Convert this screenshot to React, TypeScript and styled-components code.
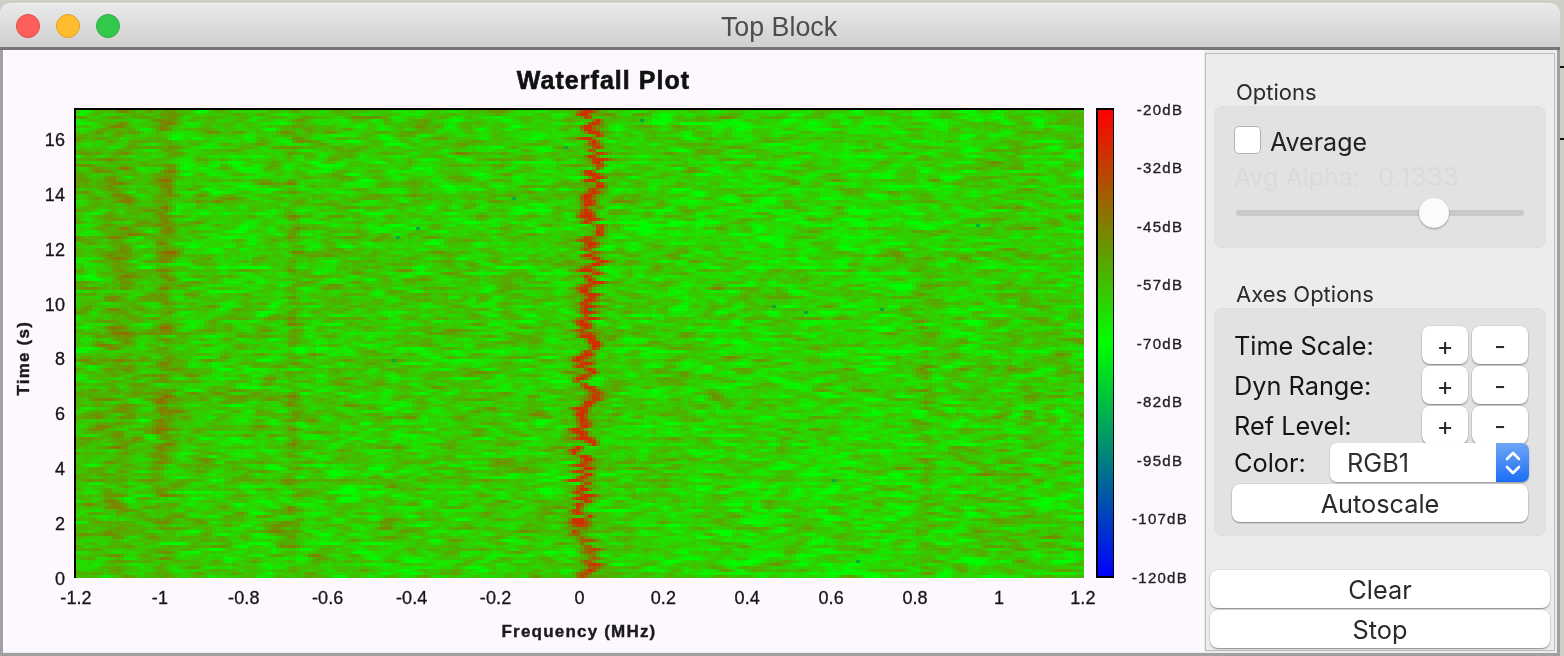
import React, { useEffect, useRef } from "react";
import styled, { createGlobalStyle } from "styled-components";

const Global = createGlobalStyle`
  html, body { margin: 0; padding: 0; background: #d2d1c9; }
  * { box-sizing: border-box; }
`;

const Desktop = styled.div`
  width: 1564px;
  height: 656px;
  overflow: hidden;
  display: flex;
  background: #cfcec6;
`;

const Window = styled.div`
  width: 1560px;
  height: 656px;
  margin-top: 3px;
  display: flex;
  flex-direction: column;
`;

const TitleBar = styled.div`
  height: 47px;
  flex: none;
  position: relative;
  display: flex;
  align-items: center;
  justify-content: center;
  padding-top: 3px;
  border-radius: 11px 11px 0 0;
  background: linear-gradient(#e9e9e9, #cfcfcf);
  border-top: 1px solid #f2f2f2;
  border-bottom: 3px solid #757575;
`;

const Lights = styled.div`
  position: absolute;
  left: 16px;
  top: 10px;
  display: flex;
  gap: 16px;
`;

const Light = styled.span<{ $fill: string; $edge: string }>`
  width: 24px;
  height: 24px;
  border-radius: 50%;
  background: ${(p) => p.$fill};
  border: 1px solid ${(p) => p.$edge};
`;

const WindowTitle = styled.div`
  font: 26.8px "Liberation Sans", sans-serif;
  color: #4d4d4d;
  transform: translateX(-1px);
`;

const Body = styled.div`
  flex: none;
  height: 606px;
  display: flex;
  background: #ececec;
  border-left: 3px solid #a2a2a2;
  border-right: 3px solid #a0a0a0;
  border-bottom: 3px solid #a0a0a0;
`;

const PlotPanel = styled.div`
  width: 1201px;
  height: 602px;
  flex: none;
  display: flex;
  flex-direction: column;
  background: #fdf8ff;
  color: #111;
  font-family: "Liberation Sans", Arial, sans-serif;
`;

const PlotTitle = styled.div`
  height: 58px;
  flex: none;
  display: flex;
  align-items: center;
  justify-content: center;
  padding-top: 3px;
  font-size: 25px;
  font-weight: 700;
  letter-spacing: 1.05px;
  -webkit-text-stroke: 0.6px #111;
  filter: blur(0.35px);
`;

const PlotRow = styled.div`
  height: 470px;
  flex: none;
  display: flex;
`;

const AxisName = styled.div`
  font-size: 17px;
  font-weight: 700;
  letter-spacing: 1.2px;
  color: #1a1a1a;
  white-space: nowrap;
  -webkit-text-stroke: 0.4px #1a1a1a;
  filter: blur(0.35px);
`;

const YName = styled(AxisName)`
  width: 42px;
  flex: none;
  padding-top: 30px;
  display: flex;
  align-items: center;
  justify-content: center;
  span {
    writing-mode: vertical-rl;
    transform: rotate(180deg);
  }
`;

const YTicks = styled.div`
  width: 20px;
  margin-right: 9px;
  flex: none;
  display: flex;
  flex-direction: column-reverse;
  align-items: flex-end;
  gap: 54.8px;
`;

const Tick = styled.div`
  height: 0;
  width: 0;
  display: flex;
  align-items: center;
  white-space: nowrap;
  font-size: 18px;
  letter-spacing: 0.1px;
  color: #141414;
  -webkit-text-stroke: 0.3px #141414;
  filter: blur(0.35px);
`;

const YTick = styled(Tick)`
  justify-content: flex-end;
  transform: translateY(1px);
`;

const Frame = styled.div`
  width: 1010px;
  height: 470px;
  flex: none;
  border-left: 2px solid #000;
  border-top: 2px solid #000;
`;

const Heat = styled.canvas`
  display: block;
  width: 1008px;
  height: 468px;
`;

const ColorBar = styled.div`
  width: 18px;
  height: 470px;
  margin-left: 12px;
  flex: none;
  border: solid #000;
  border-width: 2px 1px 2px 2px;
  background: linear-gradient(#ff0000, #00ff00 50%, #0000ff);
`;

const DbScale = styled.div`
  width: 0;
  height: 470px;
  margin-left: 46px;
  padding-top: 1px;
  padding-bottom: 1px;
  flex: none;
  display: flex;
  flex-direction: column;
  justify-content: space-between;
`;

const DbTick = styled(Tick)`
  justify-content: center;
  font-size: 15px;
  letter-spacing: 1.25px;
  color: #222;
  -webkit-text-stroke: 0.35px #222;
`;

const XTicks = styled.div`
  height: 40px;
  width: 1007px;
  margin-left: 73px;
  flex: none;
  display: flex;
  align-items: center;
  justify-content: space-between;
`;

const XTick = styled(Tick)`
  justify-content: center;
`;

const XName = styled(AxisName)`
  width: 1008px;
  margin-left: 72px;
  margin-top: 5px;
  text-align: center;
  line-height: 18px;
`;

const Side = styled.div`
  width: 353px;
  height: 603px;
  flex: none;
  padding: 3px 2px 2px 1px;
`;

const SideFrame = styled.div`
  height: 598px;
  border: 1px solid #bcbcbc;
  font-family: Inter, "Liberation Sans", sans-serif;
  display: flex;
  flex-direction: column;
  align-items: flex-start;
  padding-top: 24px;
`;

const GroupName = styled.div<{ $gap?: number }>`
  height: 28px;
  margin-left: 30px;
  margin-top: ${(p) => p.$gap ?? 0}px;
  font-size: 22px;
  line-height: 28px;
  color: #2b2b2b;
`;

const Group = styled.div<{ $height: number; $top: number }>`
  width: 332px;
  height: ${(p) => p.$height}px;
  margin-left: 8px;
  padding: ${(p) => p.$top}px 17px 0 19px;
  background: #e2e2e2;
  border: 1px solid #dedede;
  border-radius: 8px;
`;

const CheckRow = styled.div`
  height: 28px;
  display: flex;
  align-items: center;
  gap: 9px;
  font-size: 25px;
  color: #222;
`;

const CheckLabel = styled.span`
  padding-top: 3px;
`;

const CheckBox = styled.span`
  width: 27px;
  height: 28px;
  background: #fff;
  border: 1px solid #b2b2b2;
  border-radius: 5px;
`;

const Disabled = styled.div`
  height: 30px;
  margin-top: 8px;
  display: flex;
  gap: 18px;
  font-size: 25px;
  line-height: 30px;
  color: #dadada;
  white-space: nowrap;
`;

const DisabledValue = styled.span`
  letter-spacing: 0.8px;
`;

const Slider = styled.div`
  width: 288px;
  height: 30px;
  margin-top: 6px;
  margin-left: 2px;
  position: relative;
  display: flex;
  align-items: center;
`;

const Track = styled.div`
  width: 100%;
  height: 6px;
  border-radius: 3px;
  background: #c9c9c9;
`;

const Thumb = styled.div`
  position: absolute;
  left: 183px;
  top: 0;
  width: 30px;
  height: 30px;
  border-radius: 50%;
  background: #fbfbfb;
  box-shadow: 0 1px 2px rgba(0, 0, 0, 0.35);
`;

const Row = styled.div`
  height: 38px;
  margin-bottom: 2px;
  display: flex;
  align-items: center;
`;

const RowLabel = styled.div<{ $width: number }>`
  width: ${(p) => p.$width}px;
  flex: none;
  font-size: 25.3px;
  color: #151515;
  white-space: nowrap;
`;

const Button = styled.div<{ $width: number }>`
  width: ${(p) => p.$width}px;
  height: 38px;
  flex: none;
  display: flex;
  align-items: center;
  justify-content: center;
  padding-top: 1px;
  background: #fff;
  border-radius: 8px;
  box-shadow: 0 1px 1.5px rgba(0, 0, 0, 0.4), 0 0 0 0.5px rgba(0, 0, 0, 0.08);
  font-size: 25.3px;
  color: #2a2a2a;
`;

const StepButtons = styled.div`
  display: flex;
  gap: 4px;
`;

const ColorRow = styled(Row)`
  height: 39px;
  margin-top: -3px;
  position: relative;
`;

const Combo = styled.div`
  width: 199px;
  height: 39px;
  flex: none;
  display: flex;
  background: #fff;
  border-radius: 7px;
  box-shadow: 0 1px 1.5px rgba(0, 0, 0, 0.35);
  font-size: 25.3px;
  color: #2f2f2f;
`;

const ComboText = styled.div`
  flex: 1;
  padding-left: 17px;
  line-height: 40px;
`;

const ComboArrow = styled.div`
  width: 33px;
  display: flex;
  align-items: center;
  justify-content: center;
  border-radius: 0 7px 7px 0;
  background: linear-gradient(#6fa6f4, #1a6ef6);
`;

const WideInGroup = styled(Button)`
  margin-left: -2px;
`;

const BottomStack = styled.div`
  margin-top: 34px;
  margin-left: 4px;
  display: flex;
  flex-direction: column;
  gap: 2px;
`;

const Edge = styled.div`
  width: 4px;
  flex: none;
  padding-top: 66px;
  display: flex;
  flex-direction: column;
  gap: 70px;
`;

const EdgeMark = styled.span`
  height: 2px;
  background: #111;
`;

function rng(seed: number) {
  let s = seed >>> 0;
  return () => {
    s = (s + 0x6d2b79f5) >>> 0;
    let t = s;
    t = Math.imul(t ^ (t >>> 15), t | 1);
    t ^= t + Math.imul(t ^ (t >>> 7), t | 61);
    return ((t ^ (t >>> 14)) >>> 0) / 4294967296;
  };
}

const bumps: [number, number, number, number, number][] = [
  // px centre in plot, width, amplitude, row-from, row-to (fractions)
  [45, 12, 0.1, 0, 1],
  [90, 9, 0.17, 0, 0.75],
  [84, 14, 0.08, 0.6, 1],
  [218, 6, 0.12, 0, 1],
  [850, 8, 0.12, 0.3, 1],
  [930, 25, 0.03, 0, 1],
  [30, 50, 0.05, 0, 1],
];

function paint(canvas: HTMLCanvasElement) {
  const W = 252;
  const H = 156;
  const rand = rng(4242);
  const gauss = () => (rand() + rand() + rand() + rand() - 2) * 1.7;
  const off = document.createElement("canvas");
  off.width = W;
  off.height = H;
  const octx = off.getContext("2d")!;
  const img = octx.createImageData(W, H);

  const raw: number[] = new Array((W + 8) * (H + 4));
  for (let i = 0; i < raw.length; i++) raw[i] = gauss();
  const at = (x: number, y: number) => raw[(y + 2) * (W + 8) + x + 4];

  const coarse: number[] = [];
  for (let i = 0; i < 40 * 30; i++) coarse[i] = gauss();
  const field = (x: number, y: number) => {
    const fx = (x / W) * 38;
    const fy = (y / H) * 28;
    const ix = Math.floor(fx);
    const iy = Math.floor(fy);
    const ax = fx - ix;
    const ay = fy - iy;
    const c = (a: number, b: number) => coarse[b * 40 + a];
    return (
      c(ix, iy) * (1 - ax) * (1 - ay) +
      c(ix + 1, iy) * ax * (1 - ay) +
      c(ix, iy + 1) * (1 - ax) * ay +
      c(ix + 1, iy + 1) * ax * ay
    );
  };

  let wander = 0;
  for (let y = 0; y < H; y++) {
    const t = y / H;
    wander = wander * 0.3 + (rand() - 0.5) * 3;
    const rowOff = gauss() * 0.02;
    const drift = 511 + 4 * Math.sin(t * 7) + 6 * Math.sin(t * 2.6 + 0.4) - 6 * t;
    const centre = drift + wander * 6;
    const peak = (t > 0.88 ? 0.42 : 0.62) + (rand() - 0.5) * 0.18;
    const peakWidth = 4 + rand() * 6;
    for (let x = 0; x < W; x++) {
      const px = (x + 0.5) * 4;
      const n =
        at(x, y) +
        0.7 * (at(x - 1, y) + at(x + 1, y)) +
        0.3 * (at(x - 2, y) + at(x + 2, y)) +
        0.2 * (at(x, y - 1) + at(x, y + 1));
      let v = 0.2 + n * 0.058 + rowOff + field(x, y) * 0.012;
      v -= 0.035 * Math.exp(-Math.pow((px - 760) / 160, 2));
      for (const [c, w, a, from, to] of bumps) {
        if (t < from || t > to) continue;
        const d = (px - c - Math.sin(y * 0.7) * 3) / w;
        v += a * Math.exp(-d * d) * (0.7 + rand() * 0.5);
      }
      const d = (px - centre) / peakWidth;
      v += peak * Math.exp(-d * d);
      const sd = (px - drift) / 17;
      v += 0.1 * Math.exp(-sd * sd) * rand();
      const i = (y * W + x) * 4;
      const sp = rand() < 0.0003;
      const c = Math.max(0, Math.min(0.82, v));
      img.data[i] = sp ? 0 : 255 * c;
      img.data[i + 1] = sp ? 170 : 255 * (1 - c);
      img.data[i + 2] = sp ? 60 : 0;
      img.data[i + 3] = 255;
    }
  }
  octx.putImageData(img, 0, 0);
  canvas.width = 1008;
  canvas.height = 468;
  const ctx = canvas.getContext("2d")!;
  ctx.imageSmoothingEnabled = false;
  ctx.drawImage(off, 0, 0, 1008, 468);
}

function Waterfall() {
  const ref = useRef<HTMLCanvasElement>(null);
  useEffect(() => {
    if (ref.current) paint(ref.current);
  }, []);
  return <Heat ref={ref} />;
}

const Chevrons = () => (
  <svg width="18" height="28" viewBox="0 0 18 28" fill="none" stroke="#fff" strokeWidth="2.6" strokeLinecap="round" strokeLinejoin="round">
    <path d="M3 10 L9 4 L15 10" />
    <path d="M3 18 L9 24 L15 18" />
  </svg>
);

const xLabels = ["-1.2", "-1", "-0.8", "-0.6", "-0.4", "-0.2", "0", "0.2", "0.4", "0.6", "0.8", "1", "1.2"];
const yLabels = ["0", "2", "4", "6", "8", "10", "12", "14", "16"];
const dbLabels = ["-20dB", "-32dB", "-45dB", "-57dB", "-70dB", "-82dB", "-95dB", "-107dB", "-120dB"];
const steps = ["Time Scale:", "Dyn Range:", "Ref Level:"];

export default function App() {
  return (
    <Desktop>
      <Global />
      <Window>
        <TitleBar>
          <Lights>
            <Light $fill="#ff5f5a" $edge="#e2483f" />
            <Light $fill="#ffbd2e" $edge="#e1a028" />
            <Light $fill="#34c84a" $edge="#2aad3c" />
          </Lights>
          <WindowTitle>Top Block</WindowTitle>
        </TitleBar>
        <Body>
          <PlotPanel>
            <PlotTitle>Waterfall Plot</PlotTitle>
            <PlotRow>
              <YName>
                <span>Time (s)</span>
              </YName>
              <YTicks>
                {yLabels.map((l) => (
                  <YTick key={l}>{l}</YTick>
                ))}
              </YTicks>
              <Frame>
                <Waterfall />
              </Frame>
              <ColorBar />
              <DbScale>
                {dbLabels.map((l) => (
                  <DbTick key={l}>{l}</DbTick>
                ))}
              </DbScale>
            </PlotRow>
            <XTicks>
              {xLabels.map((l) => (
                <XTick key={l}>{l}</XTick>
              ))}
            </XTicks>
            <XName>Frequency (MHz)</XName>
          </PlotPanel>
          <Side>
            <SideFrame>
              <GroupName>Options</GroupName>
              <Group $height={142} $top={19}>
                <CheckRow>
                  <CheckBox />
                  <CheckLabel>Average</CheckLabel>
                </CheckRow>
                <Disabled>
                  <span>Avg Alpha:</span>
                  <DisabledValue>0.1333</DisabledValue>
                </Disabled>
                <Slider>
                  <Track />
                  <Thumb />
                </Slider>
              </Group>
              <GroupName $gap={32}>Axes Options</GroupName>
              <Group $height={228} $top={17}>
                {steps.map((s) => (
                  <Row key={s}>
                    <RowLabel $width={188}>{s}</RowLabel>
                    <StepButtons>
                      <Button $width={46}>+</Button>
                      <Button $width={56}>-</Button>
                    </StepButtons>
                  </Row>
                ))}
                <ColorRow>
                  <RowLabel $width={96}>Color:</RowLabel>
                  <Combo>
                    <ComboText>RGB1</ComboText>
                    <ComboArrow>
                      <Chevrons />
                    </ComboArrow>
                  </Combo>
                </ColorRow>
                <WideInGroup $width={296}>Autoscale</WideInGroup>
              </Group>
              <BottomStack>
                <Button $width={340}>Clear</Button>
                <Button $width={340}>Stop</Button>
              </BottomStack>
            </SideFrame>
          </Side>
        </Body>
      </Window>
      <Edge>
        <EdgeMark />
        <EdgeMark />
      </Edge>
    </Desktop>
  );
}
